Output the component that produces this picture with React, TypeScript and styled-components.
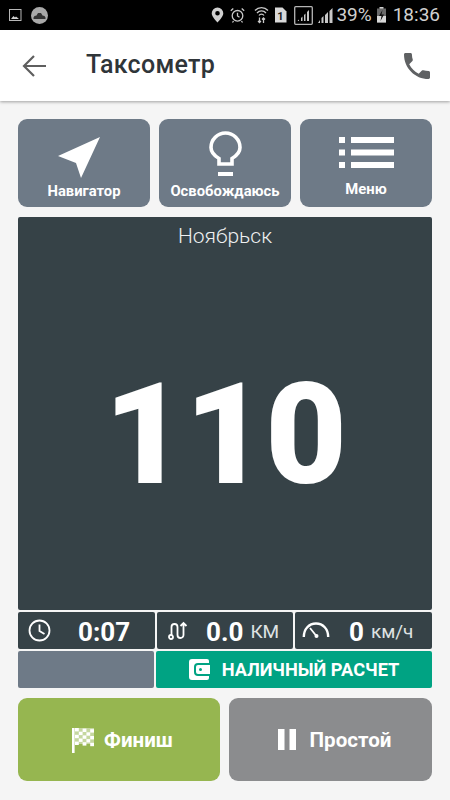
import React from "react";
import styled, { createGlobalStyle } from "styled-components";

const GlobalStyle = createGlobalStyle`
    html, body {
        margin: 0;
        padding: 0;
        background: #f5f5f5;
        font-family: Roboto, "Noto Sans", sans-serif;
    }
`;

const Page = styled.div`
    width: 450px;
    height: 800px;
    overflow: hidden;
    display: flex;
    flex-direction: column;
    background: #f5f5f5;
`;

const StatusBar = styled.div`
    height: 30px;
    flex: none;
    background: #000;
    display: flex;
    align-items: center;
    padding: 0 10px 0 9px;
    color: #c9c9c9;
`;

const StatusLeft = styled.div`
    display: flex;
    align-items: center;
    gap: 8px;
    flex: 1;
`;

const StatusRight = styled.div`
    display: flex;
    align-items: center;
`;

const StatusSlot = styled.span<{ $left: number }>`
    display: flex;
    margin-left: ${p => p.$left}px;
`;

const StatusText = styled.span<{ $left: number }>`
    font-size: 19px;
    margin-left: ${p => p.$left}px;
    line-height: 30px;
    color: #d0d0d0;
`;

const AppBar = styled.header`
    height: 71px;
    flex: none;
    background: #fff;
    box-shadow: 0 1px 3px rgba(0, 0, 0, 0.35);
    display: flex;
    align-items: center;
    padding: 0 20px 0 22px;
`;

const Title = styled.h1`
    margin: -2px 0 0 40px;
    flex: 1;
    font-size: 25px;
    font-weight: 500;
    color: #2f3539;
    letter-spacing: 0.3px;
`;

const Content = styled.main`
    flex: 1;
    display: flex;
    flex-direction: column;
    padding: 18px 18px 0;
`;

const TopRow = styled.div`
    display: grid;
    grid-template-columns: repeat(3, 132px);
    gap: 9px;
`;

const TopButton = styled.div<{ $iconTop: number; $iconShift: number; $labelBottom: number }>`
    height: 88px;
    box-sizing: border-box;
    border-radius: 9px;
    background: #6e7a87;
    color: #fff;
    display: flex;
    flex-direction: column;
    align-items: center;
    justify-content: space-between;
    padding: ${p => p.$iconTop}px 0 ${p => p.$labelBottom}px;
    font-size: 14.8px;
    font-weight: 700;
    line-height: 18px;

    svg {
        margin-left: ${p => p.$iconShift}px;
    }
`;

const MeterPanel = styled.section`
    margin-top: 10px;
    height: 393px;
    border-radius: 2px;
    background: #364247;
    color: #fff;
    display: flex;
    flex-direction: column;
    align-items: center;
`;

const City = styled.div`
    margin-top: 7px;
    font-size: 21px;
    font-weight: 300;
    line-height: 25px;
    color: #eef0f1;
`;

const Fare = styled.div`
    margin-top: 103px;
    font-size: 141px;
    font-weight: 900;
    line-height: 165px;
    letter-spacing: -1px;
`;

const StatsRow = styled.div`
    margin-top: 2px;
    display: grid;
    grid-template-columns: 137px 136px 137px;
    gap: 2px;
`;

const StatCell = styled.div<{ $pad: number }>`
    height: 37px;
    box-sizing: border-box;
    border-radius: 2px;
    background: #364247;
    color: #fff;
    display: flex;
    align-items: center;
    padding-left: ${p => p.$pad}px;
`;

const StatValue = styled.span<{ $left: number }>`
    margin-left: ${p => p.$left}px;
    margin-top: 2px;
    font-size: 26px;
    font-weight: 700;
`;

const StatUnit = styled.span`
    margin-left: 7px;
    margin-top: 2px;
    font-size: 19px;
    font-weight: 400;
    color: #dfe2e3;
`;

const PayRow = styled.div`
    margin-top: 2px;
    display: grid;
    grid-template-columns: 136px 276px;
    gap: 2px;
`;

const PayBlank = styled.div`
    height: 37px;
    border-radius: 2px;
    background: #6e7a87;
`;

const PayBadge = styled.div`
    height: 37px;
    border-radius: 2px;
    background: #00a383;
    color: #fff;
    display: flex;
    align-items: center;
    justify-content: center;
    gap: 12px;
    font-size: 18.2px;
    font-weight: 700;
`;

const BottomRow = styled.div`
    margin-top: 10px;
    display: grid;
    grid-template-columns: 202px 203px;
    gap: 9px;
`;

const BottomButton = styled.div<{ $bg: string; $gap: number; $shift: number }>`
    height: 83px;
    box-sizing: border-box;
    padding-left: ${p => p.$shift}px;
    border-radius: 9px;
    background: ${p => p.$bg};
    color: #fff;
    display: flex;
    align-items: center;
    justify-content: center;
    gap: ${p => p.$gap}px;
    font-size: 20.6px;
    font-weight: 700;
`;

const ImageIcon = () => (
    <svg width="14" height="14" viewBox="0 0 14 14">
        <rect x="0.5" y="1.5" width="11.5" height="11" fill="none" stroke="#b8b8b8" />
        <path d="M2 11l2.5-3 1.5 1.5 1-1 3 2.500z" fill="#d0d0d0" />
    </svg>
);

const CarBadge = () => (
    <svg width="17" height="17" viewBox="0 0 17 17">
        <circle cx="8.500" cy="8.500" r="8.500" fill="#a9a9a9" />
        <path d="M2.500 10.500l1-1.500 2-.5 1.500-2.500h3l1.500 2.500 2 .5 1 1.500v1.500h-12z" fill="#333" />
    </svg>
);

const PinIcon = () => (
    <svg width="13" height="16" viewBox="0 0 13 16">
        <path fillRule="evenodd" d="M6.500 0.500a5.800 5.800 0 0 1 5.800 5.800c0 3.700-5.800 9.200-5.800 9.200S0.700 10 0.700 6.300A5.800 5.800 0 0 1 6.500 0.500zm0 3.500a2.300 2.300 0 1 0 0 4.600 2.300 2.300 0 0 0 0-4.600z" fill="#d0d0d0" />
    </svg>
);

const AlarmIcon = () => (
    <svg width="15" height="16" viewBox="0 0 15 16" fill="none" stroke="#c8c8c8" strokeWidth="1.300">
        <circle cx="7.500" cy="8.800" r="5.300" />
        <path d="M7.500 5.800v3.200l2 1.300M0.800 3.800L3.300 1.500M14.200 3.800L11.700 1.500M3.500 14l-1 1.500M11.500 14l1 1.500" />
    </svg>
);

const WifiIcon = () => (
    <svg width="15" height="18" viewBox="0 0 15 18" fill="none" stroke="#c8c8c8" strokeWidth="1.300">
        <path d="M1 4.500a9 9 0 0 1 13 0M3 7a6 6 0 0 1 9 0M5 9.500a3 3 0 0 1 5 0" />
        <path d="M5.500 11.500v5M4 15l1.500 1.500L7 15M9.500 17v-5M8 13.500L9.500 12l1.500 1.500" />
    </svg>
);

const SimIcon = () => (
    <svg width="13" height="16" viewBox="0 0 13 16">
        <path d="M1 0.500h7.500l4 4v11H1z" fill="#d8d8d8" />
        <text x="6.500" y="12.500" fontSize="11" fontWeight="700" textAnchor="middle" fill="#222" fontFamily="Roboto, sans-serif">1</text>
    </svg>
);

const SignalBars = () => (
    <svg width="16" height="15" viewBox="0 0 16 15" fill="#c8c8c8">
        <path d="M0 15l2-3v3zM3.500 15v-5l2-2v7zM7 15V7l3-3v11zM11.500 15V3l3-3v15z" />
    </svg>
);

const BoxedSignal = () => (
    <svg width="19" height="19" viewBox="0 0 19 19" fill="none">
        <rect x="0.700" y="0.700" width="17.600" height="17.600" rx="1" stroke="#b5b5b5" strokeWidth="1.300" />
        <path d="M3.500 15l1.500-1.500v1.500zM7 15v-3l1.500-1.500V15zM10 15V9l1.500-1.500V15zM13 15V6l2-2v11z" fill="#c8c8c8" />
    </svg>
);

const BatteryIcon = () => (
    <svg width="9" height="16" viewBox="0 0 9 16">
        <rect x="2.500" y="0" width="4" height="2" fill="#d0d0d0" />
        <rect x="0" y="1.500" width="9" height="14" fill="#6a6a6a" />
        <rect x="0" y="9" width="9" height="6.500" fill="#d8d8d8" />
        <path d="M5.500 3L2 9h2.500L3.500 14 7 7.500H4.500z" fill="#111" />
    </svg>
);

const BackArrow = () => (
    <svg width="24" height="22" viewBox="0 0 24 22" fill="none" stroke="#5f5f5f" strokeWidth="2.200">
        <path d="M24 11H2M12 1L2 11l10 10" />
    </svg>
);

const PhoneIcon = () => (
    <svg width="26" height="26" viewBox="3 3 18 18">
        <path d="M6.620 10.790c1.440 2.830 3.760 5.140 6.590 6.590l2.200-2.200c.27-.27.67-.36 1.020-.24 1.120.37 2.330.57 3.570.57.550 0 1 .45 1 1V20c0 .55-.45 1-1 1-9.390 0-17-7.610-17-17 0-.55.45-1 1-1h3.500c.55 0 1 .45 1 1 0 1.250.2 2.450.57 3.570.11.350.03.740-.25 1.020l-2.200 2.200z" fill="#5f6163" />
    </svg>
);

const NavigatorIcon = () => (
    <svg width="42" height="42" viewBox="0 0 42 42">
        <path d="M42 0L23 41 18 26 0 19z" fill="#fff" />
    </svg>
);

const BulbIcon = () => (
    <svg width="33" height="45" viewBox="0 0 33 45">
        <path d="M10 33v-5.500C5 24.500 2 21.500 2 16.500a14.500 14.500 0 0 1 29 0c0 5-3 8-8 11V33z" fill="none" stroke="#fff" strokeWidth="3.600" />
        <rect x="9" y="41" width="15" height="4" fill="#fff" />
    </svg>
);

const MenuIcon = () => (
    <svg width="55" height="31" viewBox="0 0 55 31" fill="#fff">
        <rect x="0" y="0" width="6" height="6" />
        <rect x="12" y="0" width="43" height="6" />
        <rect x="0" y="12.500" width="6" height="6" />
        <rect x="12" y="12.500" width="43" height="6" />
        <rect x="0" y="25" width="6" height="6" />
        <rect x="12" y="25" width="43" height="6" />
    </svg>
);

const ClockIcon = () => (
    <svg width="23" height="23" viewBox="0 0 23 23" fill="none" stroke="#fff" strokeWidth="1.800">
        <circle cx="11.500" cy="11.500" r="10" />
        <path d="M11.500 5.500v6.500l5 3" />
    </svg>
);

const RouteIcon = () => (
    <svg width="20" height="20" viewBox="0 0 20 20" fill="none" stroke="#fff" strokeWidth="1.800">
        <circle cx="3" cy="16" r="2" />
        <path d="M3.500 14V6a3 3 0 0 1 6 0v8a3 3 0 0 0 6 0V2M12.500 5l3-3 3 3" />
    </svg>
);

const GaugeIcon = () => (
    <svg width="28" height="20" viewBox="0 0 28 20" fill="none" stroke="#fff" strokeWidth="2.400">
        <path d="M1.800 16C1.800 8 7 2.500 14 2.500S26.200 8 26.200 16" />
        <path d="M8 7l6 7.500" strokeWidth="1.800" />
        <circle cx="14.500" cy="15" r="2" fill="#fff" stroke="none" />
    </svg>
);

const WalletIcon = () => (
    <svg width="21" height="21" viewBox="0 0 21 21">
        <path fillRule="evenodd" d="M3 0h15a2 2 0 0 1 2 2v2H9a4 4 0 0 0-4 4v5a4 4 0 0 0 4 4h11v2a2 2 0 0 1-2 2H3a3 3 0 0 1-3-3V3a3 3 0 0 1 3-3zM9 6h12v9H9a2 2 0 0 1-2-2V8a2 2 0 0 1 2-2zm2.500 3a1.500 1.500 0 1 0 0 3 1.500 1.500 0 0 0 0-3z" fill="#fff" />
    </svg>
);

const FlagIcon = () => {
    const cells: React.ReactNode[] = [];
    for (let row = 0; row < 5; row++) {
        for (let col = 0; col < 5; col++) {
            if ((row + col) % 2 === 0) {
                cells.push(<rect key={`${row}-${col}`} x={4 + col * 3.800} y={1 + row * 3.400 + col * 0.300} width="3.800" height="3.400" fill="#fff" />);
            }
        }
    }
    return (
        <svg width="24" height="26" viewBox="0 0 24 26">
            <rect x="1" y="1" width="2.600" height="25" fill="#fff" />
            <path d="M3.600 1h19.400v16H3.600z" fill="#fff" opacity="0.45" />
            {cells}
        </svg>
    );
};

const PauseIcon = () => (
    <svg width="18" height="21" viewBox="0 0 18 21" fill="#fff">
        <rect x="0" y="0" width="6.500" height="21" />
        <rect x="11.500" y="0" width="6.500" height="21" />
    </svg>
);

const App = () => (
    <Page>
        <GlobalStyle />
        <StatusBar>
            <StatusLeft>
                <ImageIcon />
                <CarBadge />
            </StatusLeft>
            <StatusRight>
                <PinIcon />
                <StatusSlot $left={6}><AlarmIcon /></StatusSlot>
                <StatusSlot $left={9}><WifiIcon /></StatusSlot>
                <StatusSlot $left={5}><SimIcon /></StatusSlot>
                <StatusSlot $left={7}><BoxedSignal /></StatusSlot>
                <StatusSlot $left={5}><SignalBars /></StatusSlot>
                <StatusText $left={2}>39%</StatusText>
                <StatusSlot $left={5}><BatteryIcon /></StatusSlot>
                <StatusText $left={7}>18:36</StatusText>
            </StatusRight>
        </StatusBar>
        <AppBar>
            <BackArrow />
            <Title>Таксометр</Title>
            <PhoneIcon />
        </AppBar>
        <Content>
            <TopRow>
                <TopButton $iconTop={18} $iconShift={-10} $labelBottom={7}>
                    <NavigatorIcon />
                    <span>Навигатор</span>
                </TopButton>
                <TopButton $iconTop={12} $iconShift={0} $labelBottom={7}>
                    <BulbIcon />
                    <span>Освобождаюсь</span>
                </TopButton>
                <TopButton $iconTop={18} $iconShift={0} $labelBottom={9}>
                    <MenuIcon />
                    <span>Меню</span>
                </TopButton>
            </TopRow>
            <MeterPanel>
                <City>Ноябрьск</City>
                <Fare>110</Fare>
            </MeterPanel>
            <StatsRow>
                <StatCell $pad={10}>
                    <ClockIcon />
                    <StatValue $left={27}>0:07</StatValue>
                </StatCell>
                <StatCell $pad={11}>
                    <RouteIcon />
                    <StatValue $left={18}>0.0</StatValue>
                    <StatUnit>КМ</StatUnit>
                </StatCell>
                <StatCell $pad={7}>
                    <GaugeIcon />
                    <StatValue $left={19}>0</StatValue>
                    <StatUnit>км/ч</StatUnit>
                </StatCell>
            </StatsRow>
            <PayRow>
                <PayBlank />
                <PayBadge>
                    <WalletIcon />
                    <span>НАЛИЧНЫЙ РАСЧЕТ</span>
                </PayBadge>
            </PayRow>
            <BottomRow>
                <BottomButton $bg="#96b650" $gap={9} $shift={6}>
                    <FlagIcon />
                    <span>Финиш</span>
                </BottomButton>
                <BottomButton $bg="#8b8c8e" $gap={14} $shift={8}>
                    <PauseIcon />
                    <span>Простой</span>
                </BottomButton>
            </BottomRow>
        </Content>
    </Page>
);

export default App;
